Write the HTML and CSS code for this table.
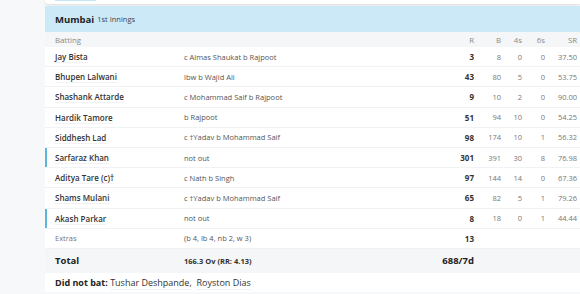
FILE: index.html
```html
<!DOCTYPE html>
<html>
<head>
<meta charset="utf-8">
<link rel="stylesheet" href="styles.css">
</head>
<body>
<div class="wrap">
  <div class="topcard"><span class="tab"></span></div>
  <section class="card">
    <div class="head"><span class="team">Mumbai</span><span class="inn">1st Innings</span></div>
    <div class="row th">
      <span>Batting</span><span></span><span class="n">R</span><span class="n">B</span><span class="n">4s</span><span class="n">6s</span><span class="n">SR</span>
    </div>
    <div class="row"><span class="name"><u>Jay Bista</u></span><span class="dis">c Almas Shaukat b Rajpoot</span><span class="n r">3</span><span class="n">8</span><span class="n">0</span><span class="n">0</span><span class="n">37.50</span></div>
    <div class="row"><span class="name"><u>Bhupen Lalwani</u></span><span class="dis">lbw b Wajid Ali</span><span class="n r">43</span><span class="n">80</span><span class="n">5</span><span class="n">0</span><span class="n">53.75</span></div>
    <div class="row"><span class="name"><u>Shashank Attarde</u></span><span class="dis">c Mohammad Saif b Rajpoot</span><span class="n r">9</span><span class="n">10</span><span class="n">2</span><span class="n">0</span><span class="n">90.00</span></div>
    <div class="row"><span class="name"><u>Hardik Tamore</u></span><span class="dis">b Rajpoot</span><span class="n r">51</span><span class="n">94</span><span class="n">10</span><span class="n">0</span><span class="n">54.25</span></div>
    <div class="row"><span class="name"><u>Siddhesh Lad</u></span><span class="dis">c †Yadav b Mohammad Saif</span><span class="n r">98</span><span class="n">174</span><span class="n">10</span><span class="n">1</span><span class="n">56.32</span></div>
    <div class="row active"><span class="name"><u>Sarfaraz Khan</u></span><span class="dis">not out</span><span class="n r">301</span><span class="n">391</span><span class="n">30</span><span class="n">8</span><span class="n">76.98</span></div>
    <div class="row"><span class="name"><u>Aditya Tare (c)†</u></span><span class="dis">c Nath b Singh</span><span class="n r">97</span><span class="n">144</span><span class="n">14</span><span class="n">0</span><span class="n">67.36</span></div>
    <div class="row"><span class="name"><u>Shams Mulani</u></span><span class="dis">c †Yadav b Mohammad Saif</span><span class="n r">65</span><span class="n">82</span><span class="n">5</span><span class="n">1</span><span class="n">79.26</span></div>
    <div class="row active"><span class="name"><u>Akash Parkar</u></span><span class="dis">not out</span><span class="n r">8</span><span class="n">18</span><span class="n">0</span><span class="n">1</span><span class="n">44.44</span></div>
    <div class="row extras"><span class="lbl">Extras</span><span class="dis">(b 4, lb 4, nb 2, w 3)</span><span class="n r">13</span><span></span><span></span><span></span><span></span></div>
    <div class="row total"><span class="tl">Total</span><span class="ov">166.3 Ov (RR: 4.13)</span><span class="n tr">688/7d</span><span></span><span></span><span></span><span></span></div>
    <div class="dnb"><b>Did not bat:</b> <u>Tushar Deshpande,</u>&nbsp; <u>Royston Dias</u></div>
  </section>
</div>
</body>
</html>
```
FILE: styles.css
```css
* { box-sizing: border-box; }
html, body { margin: 0; padding: 0; }
body {
  background: #f7f8fa;
  font-family: "Open Sans", "DejaVu Sans", sans-serif;
  color: #333;
  width: 580px;
  height: 294px;
  overflow: hidden;
}
.wrap { padding-left: 45px; }
.topcard {
  height: 4px;
  background: #fff;
  border-bottom-left-radius: 4px;
  box-shadow: 0 1px 3px rgba(0,0,0,0.12);
  padding-left: 10px;
}
.tab {
  display: block;
  width: 41px;
  height: 1px;
  background: #c4e6f6;
}
.card {
  margin-top: 2px;
  background: #fff;
}
.head {
  height: 26px;
  background: #cce9f7;
  padding-left: 10px;
  display: flex;
  align-items: center;
  gap: 3px;
}
.team { font-weight: 700; font-size: 9.5px; color: #222; }
.inn { font-size: 7.5px; color: #444; }
.row {
  display: grid;
  grid-template-columns: 129px 1fr 40px 27px 21px 23px 32px;
  align-items: center;
  height: 20.2px;
  padding: 0 3px 0 10px;
  border-bottom: 1px solid #f1f2f4;
  font-size: 7.5px;
  color: #777;
}
.row.th {
  height: 15px;
  background: #f5f6f8;
  color: #8a8a8a;
  border-bottom: none;
  font-size: 7.8px;
}
.row.active { box-shadow: inset 2px 0 0 #5ab7d6; }
.n { text-align: right; }
.name { font-weight: 600; color: #333; font-size: 8px; }
u { text-decoration: none; border-bottom: 1px solid #f2f2f2; }
.dis { color: #555; font-size: 7.5px; }
.r { font-weight: 700; color: #333; font-size: 8px; }
.lbl { color: #777; font-size: 7.5px; }
.row.total {
  height: 24px;
  background: #f5f6f8;
  border-bottom: none;
}
.tl { font-weight: 700; font-size: 9.5px; color: #222; }
.ov { font-weight: 700; font-size: 7.5px; color: #333; }
.tr { font-weight: 700; font-size: 9.5px; color: #222; }
.dnb {
  padding: 3px 10px;
  font-size: 9px;
  color: #333;
}
.dnb b { font-weight: 700; color: #222; }
```
